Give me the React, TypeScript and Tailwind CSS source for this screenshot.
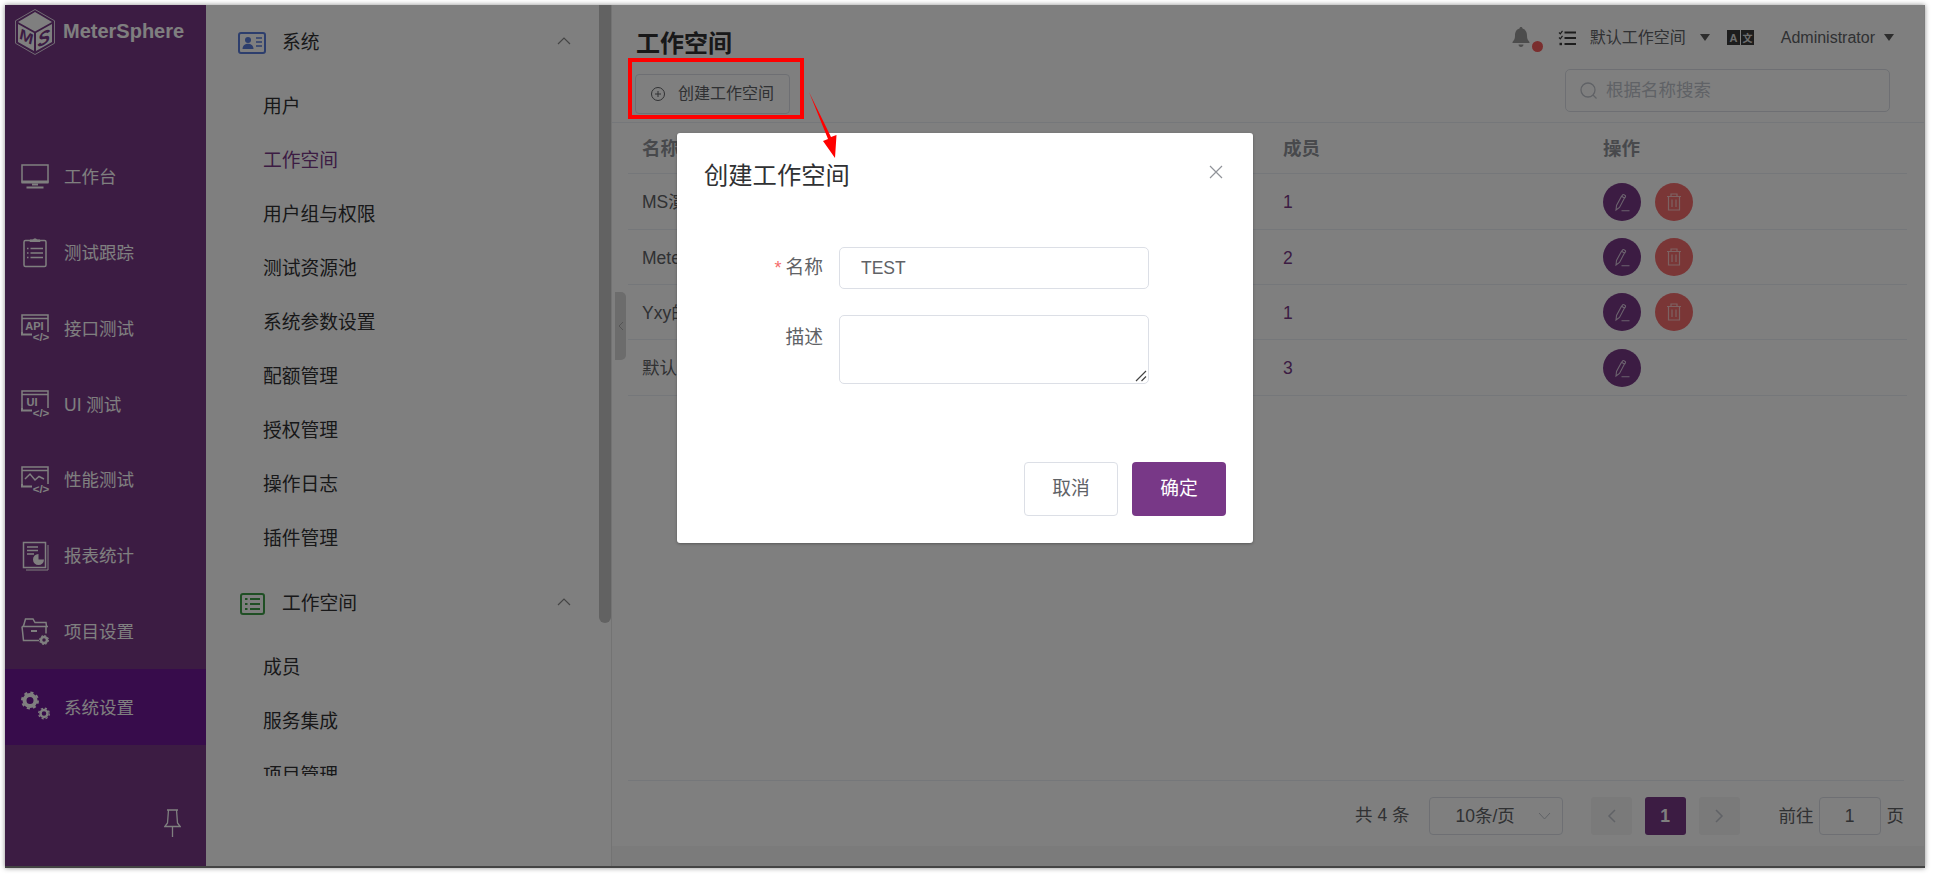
import React from "react";

const S = { fill: "none", stroke: "#fff", strokeWidth: 1.5 } as const;

function CodeMark() {
  return (
    <text x="20" y="27.500" fontSize="11.500" fontWeight="700" fill="#fff" textAnchor="middle" fontFamily="Liberation Sans, sans-serif">
      {"</>"}
    </text>
  );
}

function Frame() {
  return (
    <>
      <path d="M1 19V2h26v17M1 5.500h26" {...S} />
      <path d="M1 19v2.500h10" {...S} strokeWidth={2} />
    </>
  );
}

const icons: Record<string, React.ReactNode> = {
  monitor: (
    <>
      <rect x="1" y="3" width="26" height="17" {...S} />
      <rect x="0.5" y="18.5" width="27" height="3" fill="#fff" />
      <path d="M11 21.500v2h6v-2z" fill="#fff" />
      <rect x="5.500" y="24.500" width="17" height="2" fill="#fff" />
    </>
  ),
  clipboard: (
    <>
      <rect x="3" y="2.500" width="22" height="26" rx="1.500" {...S} />
      <path d="M9 3.500V2h3c0-1.500 4-1.500 4 0h3v1.500z" fill="#fff" stroke="#fff" />
      <path d="M6 10.500h1.500M6 15h1.500M6 19.500h1.500M9.500 10.500H22M9.500 15H22M9.500 19.500H22" {...S} />
    </>
  ),
  api: (
    <>
      <Frame />
      <text x="13.500" y="16.500" fontSize="11" fontWeight="700" fill="#fff" textAnchor="middle" fontFamily="Liberation Sans, sans-serif">API</text>
      <CodeMark />
    </>
  ),
  ui: (
    <>
      <Frame />
      <text x="11" y="16.500" fontSize="11" fontWeight="700" fill="#fff" textAnchor="middle" fontFamily="Liberation Sans, sans-serif">UI</text>
      <CodeMark />
    </>
  ),
  perf: (
    <>
      <Frame />
      <path d="M4 14l5-5 5 6 4-3.500 5 2.500" {...S} />
      <CodeMark />
    </>
  ),
  report: (
    <>
      <rect x="2.500" y="1.500" width="22" height="25" {...S} />
      <path d="M27 4v25H5" {...S} strokeWidth={1} />
      <path d="M6 6h11M6 9.500h11M6 13h7" {...S} />
      <path d="M17.500 13a5.500 5.500 0 1 0 5.500 5.500h-5.500z" fill="#fff" />
    </>
  ),
  folder: (
    <>
      <path d="M2.500 10L4.500 3h7.500l2 3.500H25l.5 4M1 10.500h26l-2 0v7M1 10.500l1.500 14H18" {...S} />
      <path d="M10 15h6" {...S} strokeWidth={2} />
      <circle cx="23" cy="24" r="3" fill="none" stroke="#fff" strokeWidth="2.500" />
      <circle cx="23" cy="24" r="4.500" fill="none" stroke="#fff" strokeWidth="1" strokeDasharray="2 1.500" />
    </>
  ),
  settings: (
    <>
      <circle cx="9" cy="8.500" r="5.500" fill="none" stroke="#fff" strokeWidth="4" />
      <circle cx="9" cy="8.500" r="8" fill="none" stroke="#fff" strokeWidth="2" strokeDasharray="3.100 3.200" />
      <circle cx="23" cy="21.500" r="3.500" fill="none" stroke="#fff" strokeWidth="2.500" />
      <circle cx="23" cy="21.500" r="5.300" fill="none" stroke="#fff" strokeWidth="1.300" strokeDasharray="2.200 2" />
    </>
  ),
};

const navItems = [
  ["monitor", "工作台"],
  ["clipboard", "测试跟踪"],
  ["api", "接口测试"],
  ["ui", "UI 测试"],
  ["perf", "性能测试"],
  ["report", "报表统计"],
  ["folder", "项目设置"],
  ["settings", "系统设置"],
];

function Logo() {
  return (
    <svg width="40" height="46" viewBox="0 0 40 46" className="shrink-0">
      <path d="M20 .5L39.500 11.750v22.500L20 45.500.5 34.250v-22.500z" fill="none" stroke="#fff" strokeWidth=".8" />
      <path d="M20 3l17 10-17 9.500L3 13z" fill="#fff" />
      <path d="M3 15l16 9v18L3 33z" fill="#fff" />
      <path d="M37 15l-16 9v18l16-9z" fill="#fff" />
      <text transform="translate(4.500 29.500) skewY(28)" fontSize="16" fontWeight="700" fontStyle="italic" fill="#783887" fontFamily="Liberation Sans, sans-serif">M</text>
      <text transform="translate(22.500 39) skewY(-28)" fontSize="19" fontWeight="700" fontStyle="italic" fill="#783887" fontFamily="Liberation Sans, sans-serif">S</text>
    </svg>
  );
}

function Sidebar() {
  return (
    <aside className="w-[201px] h-full bg-[#783887] flex flex-col shrink-0">
      <div className="h-[134px] flex items-start pl-[10px] pt-[4px] gap-[8px]">
        <Logo />
        <span className="text-white font-bold text-[20px] leading-[44px]">MeterSphere</span>
      </div>
      {navItems.map(([icon, label]) => (
        <div
          key={label}
          className={`h-[75.75px] flex items-center pl-[16px] gap-[15px] text-white text-[17.500px] ${label === "系统设置" ? "bg-[#6f1896]" : ""}`}
        >
          <svg width="28" height="30" viewBox="0 0 28 30" className="shrink-0 overflow-visible">
            {icons[icon]}
          </svg>
          <span className="pt-[1px]">{label}</span>
        </div>
      ))}
      <div className="flex-1 flex items-end justify-end pr-[25px] pb-[29px]">
        <svg width="17" height="28" viewBox="0 0 17 28" fill="none" stroke="#fff" strokeWidth="1.300">
          <path d="M3 1h11M4.500 1l-1 13L.8 17.500h15.400L13.500 14l-1-13M8.500 17.500V28" />
        </svg>
      </div>
    </aside>
  );
}

function Chevron() {
  return (
    <svg width="14" height="8" viewBox="0 0 14 8" fill="none" stroke="#8a8a8a" strokeWidth="1.200" className="shrink-0 mb-[3px]">
      <path d="M1 7l6-6 6 6" />
    </svg>
  );
}

function MenuHead({ icon, label }: { icon: React.ReactNode; label: string }) {
  return (
    <div className="h-[75px] shrink-0 flex items-center pl-[32px] pr-[28px]">
      <span className="w-[28px] flex justify-center">{icon}</span>
      <span className="ml-[16px] flex-1 pt-[2px] text-[18.750px] text-[#303133]">{label}</span>
      <Chevron />
    </div>
  );
}

function MenuRow({ label, active }: { label: string; active?: boolean }) {
  return (
    <div className={`h-[54px] shrink-0 flex items-center pl-[57px] pt-[1px] text-[18.750px] ${active ? "text-[#783887]" : "text-[#303133]"}`}>
      {label}
    </div>
  );
}

function SubMenu() {
  return (
    <div className="w-[406px] h-full shrink-0 flex bg-white border-r border-[#e6e6e6]">
      <div className="flex-1 h-[771px] overflow-hidden flex flex-col">
        <MenuHead
          label="系统"
          icon={
            <svg width="28" height="22" viewBox="0 0 28 22">
              <rect x="1" y="1" width="26" height="20" rx="2" fill="none" stroke="#5a7ddb" strokeWidth="2" />
              <circle cx="10" cy="8" r="3" fill="#5a7ddb" />
              <path d="M4.500 17c0-7 11-7 11 0z" fill="#5a7ddb" />
              <path d="M18 6h6M18 10h6M18 14h6" stroke="#5a7ddb" strokeWidth="1.600" />
            </svg>
          }
        />
        {["用户", "工作空间", "用户组与权限", "测试资源池", "系统参数设置", "配额管理", "授权管理", "操作日志", "插件管理"].map((m) => (
          <MenuRow key={m} label={m} active={m === "工作空间"} />
        ))}
        <MenuHead
          label="工作空间"
          icon={
            <svg width="25" height="22" viewBox="0 0 25 22">
              <rect x="1" y="1" width="23" height="20" rx="2" fill="none" stroke="#3f9e48" strokeWidth="2" />
              <path d="M5 6h2.500M5 11h2.500M5 16h2.500M10 6h10M10 11h10M10 16h10" stroke="#3f9e48" strokeWidth="2" />
            </svg>
          }
        />
        {["成员", "服务集成", "项目管理"].map((m) => (
          <MenuRow key={m} label={m} />
        ))}
      </div>
      <div className="w-[12px] h-[618px] bg-[#c4c4c4] rounded-b-[6px]" />
    </div>
  );
}

function PencilIcon() {
  return (
    <svg width="18" height="20" viewBox="0 0 18 20" fill="none" stroke="#fff" strokeWidth="1.100" opacity=".7">
      <path d="M3.500 13.500L3 18l3.500-2.500 5-9.500-3-1.800zM8.700 4.500l1-1.800c.4-.7 3.300 1 2.900 1.700l-1 1.800M8.500 18.800h8" />
    </svg>
  );
}

function TrashIcon() {
  return (
    <svg width="16" height="18" viewBox="0 0 16 18" fill="none" stroke="#fff" strokeWidth="1.200" opacity=".6">
      <path d="M1 3.500h14M5 3.500V1h6v2.500M2.500 3.500v13.500h11V3.500M6 6.500v7.500M10 6.500v7.500" />
    </svg>
  );
}

const rows = [
  ["MS演示工作空间", "1", true],
  ["MeterSphere", "2", true],
  ["Yxy的工作空间", "1", true],
  ["默认工作空间", "3", false],
] as const;

function Caret() {
  return <span className="w-0 h-0 border-x-[5.500px] border-x-transparent border-t-[7px] border-t-[#5a5a5a]" />;
}

function TopNav() {
  return (
    <div className="flex items-center h-[64px] pt-[1px] text-[16px] text-[#606266]">
      <span className="relative w-[31px] h-[24px] mt-[2px]">
        <svg width="18" height="21" viewBox="0 0 18 21" fill="#999">
          <path d="M9 0c1 0 1.500.7 1.500 1.500C14 2.500 15 5.500 15 8.500c0 3 .7 4.500 2.500 6.500v1H.5v-1C2.300 13 3 11.500 3 8.500c0-3 1-6 4.500-7C7.500.7 8 0 9 0zM6.500 17.500h5C11.500 19 10.500 20 9 20s-2.500-1-2.500-2.500z" />
        </svg>
        <span className="absolute left-[20px] top-[14px] w-[11px] h-[11px] rounded-full bg-[#f55c5c]" />
      </span>
      <svg width="18" height="16" viewBox="0 0 18 16" className="ml-[15px]" fill="none" stroke="#3a3a3a">
        <path d="M1 2.500l1.300 1.300L4.500.8M1 7.500l1.300 1.300 2.200-3" strokeWidth="1.200" />
        <path d="M6.500 2.500H18M6.500 8H18M6.500 14H18" strokeWidth="2" />
        <path d="M1.500 14h2.500" strokeWidth="2.400" />
      </svg>
      <span className="ml-[14px]">默认工作空间</span>
      <span className="ml-[14px] flex"><Caret /></span>
      <svg width="27" height="15" viewBox="0 0 27 15" className="ml-[17px]">
        <rect width="13" height="15" fill="#3a3a3a" />
        <rect x="14" width="13" height="15" fill="#3a3a3a" />
        <text x="6.500" y="12" fontSize="11" fontWeight="700" fill="#ddd" textAnchor="middle" fontFamily="Liberation Sans, sans-serif">A</text>
        <text x="20.500" y="11.500" fontSize="10" fontWeight="700" fill="#ddd" textAnchor="middle" fontFamily="Noto Sans CJK SC, sans-serif">文</text>
      </svg>
      <span className="ml-[27px]">Administrator</span>
      <span className="ml-[9px] flex"><Caret /></span>
    </div>
  );
}

function MainPanel() {
  return (
    <div className="flex-1 h-full bg-[#f7f7f7] flex flex-col min-w-0 relative">
      <div className="h-[841px] bg-white flex flex-col shrink-0 mr-[1px]">
        <div className="flex justify-between items-start pl-[24px] pr-[30px] h-[64px] shrink-0">
          <h1 className="mt-[21px] text-[24px] leading-[36px] font-bold text-[#303133]">工作空间</h1>
          <TopNav />
        </div>
        <div className="flex justify-between items-start pl-[23px] pr-[34px] h-[54px] shrink-0 border-b border-[#ebeef5]">
          <button className="mt-[5px] w-[155px] h-[40px] border border-[#dcdfe6] rounded-[4px] flex items-center justify-center gap-[13px] text-[16px] text-[#606266]">
            <svg width="14" height="14" viewBox="0 0 14 14" fill="none" stroke="#606266" strokeWidth="1">
              <circle cx="7" cy="7" r="6.500" />
              <path d="M7 4v6M4 7h6" />
            </svg>
            创建工作空间
          </button>
          <div className="w-[325px] h-[43px] border border-[#dcdfe6] rounded-[5px] flex items-center pl-[14px] gap-[8px] text-[#c0c4cc] text-[17.500px]">
            <svg width="18" height="18" viewBox="0 0 18 18" fill="none" stroke="#c0c4cc" strokeWidth="1.300">
              <circle cx="8" cy="8" r="7" />
              <path d="M13 13l3.500 3.500" />
            </svg>
            根据名称搜索
          </div>
        </div>
        <div className="ml-[16px] mr-[17px] flex flex-col text-[17.500px]">
          <div className="h-[51px] flex items-center pt-[2px] border-b border-[#ebeef5] font-bold text-[#909399] text-[18.500px]">
            <span className="w-[641px] pl-[14px]">名称</span>
            <span className="w-[320px] pl-[14px]">成员</span>
            <span className="pl-[14px]">操作</span>
          </div>
          {rows.map(([name, count, del], i) => (
            <div key={name} className={`flex items-center border-b border-[#ebeef5] text-[#606266] ${i === 0 || i === 3 ? "h-[56px]" : "h-[55px]"}`}>
              <span className="w-[641px] pl-[14px] pt-[2px]">{name}</span>
              <span className="w-[320px] pl-[14px] pt-[2px] text-[#783887]">{count}</span>
              <span className="pl-[14px] flex gap-[14px]">
                <span className="w-[38px] h-[38px] rounded-full bg-[#783887] flex items-center justify-center"><PencilIcon /></span>
                {del && <span className="w-[38px] h-[38px] rounded-full bg-[#f56c6c] flex items-center justify-center"><TrashIcon /></span>}
              </span>
            </div>
          ))}
        </div>
        <div className="flex-1" />
        <div className="h-[66px] shrink-0 ml-[16px] mr-[20px] border-t border-[#ebeef5] flex items-start pt-[16px] justify-end text-[17.500px] text-[#606266]">
          <span className="leading-[36px] mr-[19px]">共 4 条</span>
          <div className="w-[134px] h-[38px] border border-[#dcdfe6] rounded-[4px] flex items-center pl-[26px] pr-[11px] justify-between">
            <span>10条/页</span>
            <svg width="13" height="8" viewBox="0 0 13 8" fill="none" stroke="#c0c4cc"><path d="M1 1l5.500 6L12 1" /></svg>
          </div>
          <span className="ml-[28px] w-[41px] h-[38px] rounded-[3px] bg-[#f4f4f5] flex items-center justify-center">
            <svg width="9" height="14" viewBox="0 0 9 14" fill="none" stroke="#c0c4cc" strokeWidth="1.500"><path d="M8 1L2 7l6 6" /></svg>
          </span>
          <span className="ml-[13px] w-[41px] h-[38px] rounded-[3px] bg-[#783887] text-white font-bold flex items-center justify-center">1</span>
          <span className="ml-[13px] w-[41px] h-[38px] rounded-[3px] bg-[#f4f4f5] flex items-center justify-center">
            <svg width="9" height="14" viewBox="0 0 9 14" fill="none" stroke="#c0c4cc" strokeWidth="1.500"><path d="M1 1l6 6-6 6" /></svg>
          </span>
          <span className="ml-[39px] leading-[38px]">前往</span>
          <input readOnly value="1" className="ml-[5px] w-[62px] h-[38px] border border-[#dcdfe6] rounded-[4px] text-center outline-none" />
          <span className="ml-[6px] leading-[38px]">页</span>
        </div>
      </div>
      <div className="absolute left-[3px] top-[287px] w-[11px] h-[68px] rounded-r-[5px] bg-[#d8d8d8] flex items-center justify-center">
        <svg width="6" height="10" viewBox="0 0 6 10" fill="none" stroke="#aaa"><path d="M5 1L1 5l4 4" /></svg>
      </div>
    </div>
  );
}

function Dialog() {
  return (
    <div className="absolute left-[672px] top-[128px] w-[576px] h-[410px] bg-white rounded-[3px] shadow-[0_1px_3px_rgba(0,0,0,0.3)] flex flex-col">
      <div className="flex justify-between items-start pl-[27px] pr-[30px] pt-[25px]">
        <span className="text-[24.300px] leading-[36px] text-[#303133]">创建工作空间</span>
        <svg width="14" height="14" viewBox="0 0 14 14" className="mt-[7px]" fill="none" stroke="#909399" strokeWidth="1.200"><path d="M1 1l12 12M13 1L1 13" /></svg>
      </div>
      <div className="mt-[53px] flex items-center h-[42px]">
        <span className="w-[146px] text-right text-[18.750px] text-[#606266]">
          <span className="text-[#f56c6c] text-[18px] mr-[4px]">*</span>名称
        </span>
        <input readOnly value="TEST" className="ml-[16px] w-[310px] h-[42px] border border-[#dcdfe6] rounded-[5px] pl-[21px] text-[17.500px] text-[#606266] outline-none" />
      </div>
      <div className="mt-[26px] flex items-start">
        <span className="w-[146px] text-right text-[18.750px] leading-[45px] text-[#606266]">描述</span>
        <div className="relative ml-[16px]">
          <textarea readOnly className="w-[310px] h-[69px] border border-[#dcdfe6] rounded-[5px] outline-none block resize-none" />
          <svg className="absolute right-[2px] bottom-[2px]" width="12" height="12" viewBox="0 0 12 12" fill="none" stroke="#444" strokeWidth="1.200">
            <path d="M1 11L11 1M6.500 11L11 6.500" />
          </svg>
        </div>
      </div>
      <div className="flex-1" />
      <div className="flex justify-end gap-[14px] pr-[27px] pb-[27px]">
        <button className="w-[94px] h-[54px] border border-[#dcdfe6] rounded-[4px] text-[18.750px] text-[#606266]">取消</button>
        <button className="w-[94px] h-[54px] bg-[#783887] rounded-[4px] text-[18.750px] text-white">确定</button>
      </div>
    </div>
  );
}

export default function App() {
  return (
    <div className="relative w-full h-[875px] bg-white overflow-hidden [font-family:'Liberation_Sans','Noto_Sans_CJK_SC',sans-serif]">
      <div className="relative ml-[5px] mt-[5px] w-[1920px] h-[863px] border-b-[2px] border-[#444] shadow-[0_0_5px_rgba(0,0,0,0.45)]">
        <div className="flex w-full h-[861px] overflow-hidden">
          <Sidebar />
          <SubMenu />
          <MainPanel />
        </div>
        <div className="absolute inset-0 bg-black/50" />
        <Dialog />
      </div>
      <div className="absolute left-[628px] top-[58px] w-[176px] h-[61px] border-[4px] border-[#ff0000]" />
      <svg className="absolute left-[800px] top-[85px]" width="45" height="80" viewBox="0 0 45 80">
        <path d="M9 7L31 52 36.500 50 35 73 23 56 28 54z" fill="#f00" />
      </svg>
    </div>
  );
}
